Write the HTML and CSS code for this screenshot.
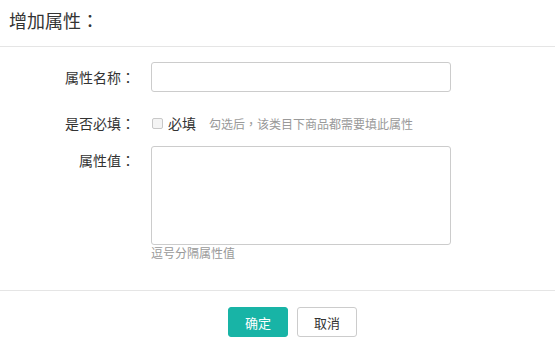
FILE: index.html
```html
<!DOCTYPE html>
<html lang="zh-CN">
<head>
<meta charset="utf-8">
<link rel="stylesheet" href="styles.css">
</head>
<body>
<div class="dialog">
  <div class="header">增加属性<span class="punct" lang="zh-TW">：</span></div>
  <div class="body">
    <div class="row row-name">
      <div class="label">属性名称<span class="punct" lang="zh-TW">：</span></div>
      <div class="field"><div class="input"></div></div>
    </div>
    <div class="row row-req">
      <div class="label">是否必填<span class="punct" lang="zh-TW">：</span></div>
      <div class="field check-field">
        <span class="checkbox"></span>
        <span class="check-text">必填</span>
        <span class="tip">勾选后<span class="punct" lang="zh-TW">，</span>该类目下商品都需要填此属性</span>
      </div>
    </div>
    <div class="row row-val">
      <div class="label">属性值<span class="punct" lang="zh-TW">：</span></div>
      <div class="field">
        <div class="textarea"></div>
        <div class="help">逗号分隔属性值</div>
      </div>
    </div>
  </div>
  <div class="footer">
    <button class="btn btn-primary">确定</button>
    <button class="btn btn-default">取消</button>
  </div>
</div>
</body>
</html>
```
FILE: styles.css
```css
html, body {
  margin: 0;
  padding: 0;
  background: #fff;
}
body {
  width: 555px;
  height: 346px;
  overflow: hidden;
  font-family: "Noto Sans CJK SC", "Noto Sans", sans-serif;
  color: #333;
}
.punct {
  font-family: "Noto Sans CJK TC", "Noto Sans CJK SC", sans-serif;
}
.header {
  height: 47px;
  box-sizing: border-box;
  padding: 8px 0 0 9px;
  font-size: 18px;
  line-height: 24px;
  color: #333;
  border-bottom: 1px solid #e5e5e5;
}
.body {
  padding: 15px 0 29px 0;
}
.row {
  display: flex;
}
.label {
  width: 135px;
  padding-right: 16px;
  text-align: right;
  font-size: 14px;
  color: #333;
  flex: none;
}
.row-name .label {
  line-height: 30px;
}
.input {
  width: 300px;
  height: 30px;
  box-sizing: border-box;
  border: 1px solid #ccc;
  border-radius: 3px;
}
.row-req {
  margin-top: 21px;
}
.row-req .label {
  line-height: 20px;
}
.check-field {
  display: flex;
  align-items: center;
  height: 20px;
}
.checkbox {
  width: 11px;
  height: 11px;
  box-sizing: border-box;
  border: 1px solid #c8c8c8;
  border-radius: 2px;
  background: #f4f4f4;
  margin: 0 5px 0 1px;
}
.check-text {
  font-size: 14px;
  color: #333;
  margin-right: 13px;
}
.tip {
  font-size: 12px;
  color: #999;
}
.row-val {
  margin-top: 13px;
}
.row-val .label {
  line-height: 28px;
}
.textarea {
  width: 300px;
  height: 99px;
  box-sizing: border-box;
  border: 1px solid #ccc;
  border-radius: 3px;
}
.help {
  font-size: 12px;
  line-height: 16px;
  color: #999;
}
.footer {
  border-top: 1px solid #e5e5e5;
  padding: 16px 0 0 30px;
  display: flex;
  justify-content: center;
  gap: 9px;
}
.btn {
  width: 60px;
  height: 30px;
  box-sizing: border-box;
  border-radius: 3px;
  font-family: "Noto Sans CJK SC", "Noto Sans", sans-serif;
  font-size: 13px;
  padding: 0;
  margin: 0;
}
.btn-primary {
  background: #18b4a6;
  border: 1px solid #18b4a6;
  color: #fff;
}
.btn-default {
  background: #fff;
  border: 1px solid #ccc;
  color: #333;
}
```
